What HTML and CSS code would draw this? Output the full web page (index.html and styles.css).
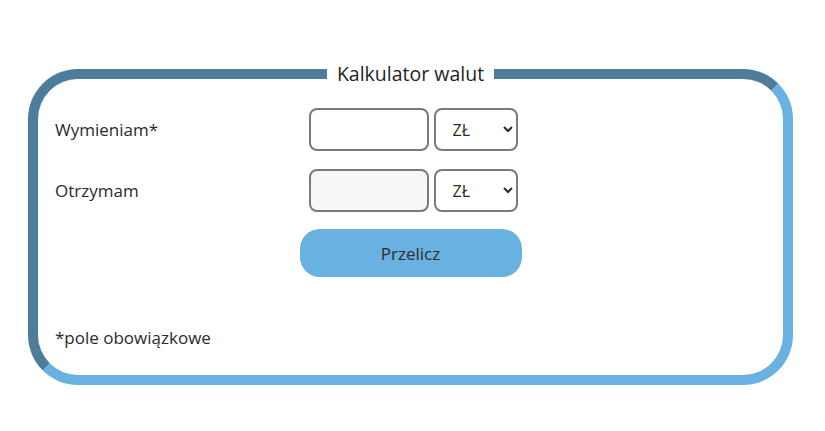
FILE: index.html
```html
<!DOCTYPE html>
<html lang="pl">
<head>
<meta charset="utf-8">
<title>Kalkulator walut</title>
<link rel="stylesheet" href="styles.css">
</head>
<body>
<main class="page">
  <form class="calc">
    <fieldset class="calc-box">
      <legend class="calc-title">Kalkulator walut</legend>
      <div class="row">
        <label class="row-label" for="amount">Wymieniam*</label>
        <div class="group">
          <input class="field" id="amount" type="text">
          <select class="currency"><option>ZŁ</option></select>
        </div>
      </div>
      <div class="row">
        <label class="row-label" for="result">Otrzymam</label>
        <div class="group">
          <input class="field field-readonly" id="result" type="text" readonly>
          <select class="currency"><option>ZŁ</option></select>
        </div>
      </div>
      <div class="actions">
        <button class="btn" type="button">Przelicz</button>
      </div>
      <p class="note">*pole obowiązkowe</p>
    </fieldset>
  </form>
</main>
</body>
</html>
```

FILE: styles.css
```css
html, body {
  margin: 0;
  padding: 0;
  background: #ffffff;
}

body {
  font-family: "Open Sans", "Noto Sans", sans-serif;
  color: #2b2b2b;
  font-size: 16px;
}

.page {
  padding: 63px 32px 0 28px;
}

.calc-box {
  margin: 0;
  width: 765px;
  box-sizing: border-box;
  border-style: solid;
  border-width: 10px;
  border-color: #4e7d9b #68b1e0 #68b1e0 #4e7d9b;
  border-radius: 50px;
  padding: 23px 17px 26px 17px;
}

.calc-title {
  margin: 0 auto;
  padding: 0 10px;
  font-size: 19.5px;
  line-height: 22px;
  color: #1f1f1f;
}

.row {
  display: grid;
  grid-template-columns: 1fr auto 1fr;
  align-items: center;
  margin-bottom: 18px;
}

.row-label {
  font-size: 17px;
}

.group {
  display: flex;
  gap: 5px;
  margin-left: 5px;
}

.field {
  width: 120px;
  height: 43px;
  box-sizing: border-box;
  border: 2px solid #7a7a7a;
  border-radius: 8px;
  background: #ffffff;
  font: inherit;
  padding: 0 8px;
}

.field-readonly {
  background: #f7f7f7;
}

.currency {
  width: 84px;
  height: 43px;
  box-sizing: border-box;
  border: 2px solid #7a7a7a;
  border-radius: 8px;
  background: #ffffff;
  font: inherit;
  font-size: 16px;
  color: #2b2b2b;
  padding: 0 10px 0 13px;
}

.actions {
  display: flex;
  justify-content: center;
  margin-top: -1px;
}

.btn {
  width: 222px;
  height: 48px;
  border: 0;
  border-radius: 20px;
  background: #68b1e0;
  color: #2e2e2e;
  font: inherit;
  font-size: 17px;
  cursor: pointer;
}

.note {
  margin: 50px 0 0 0;
  font-size: 17px;
  line-height: 22px;
}
```
